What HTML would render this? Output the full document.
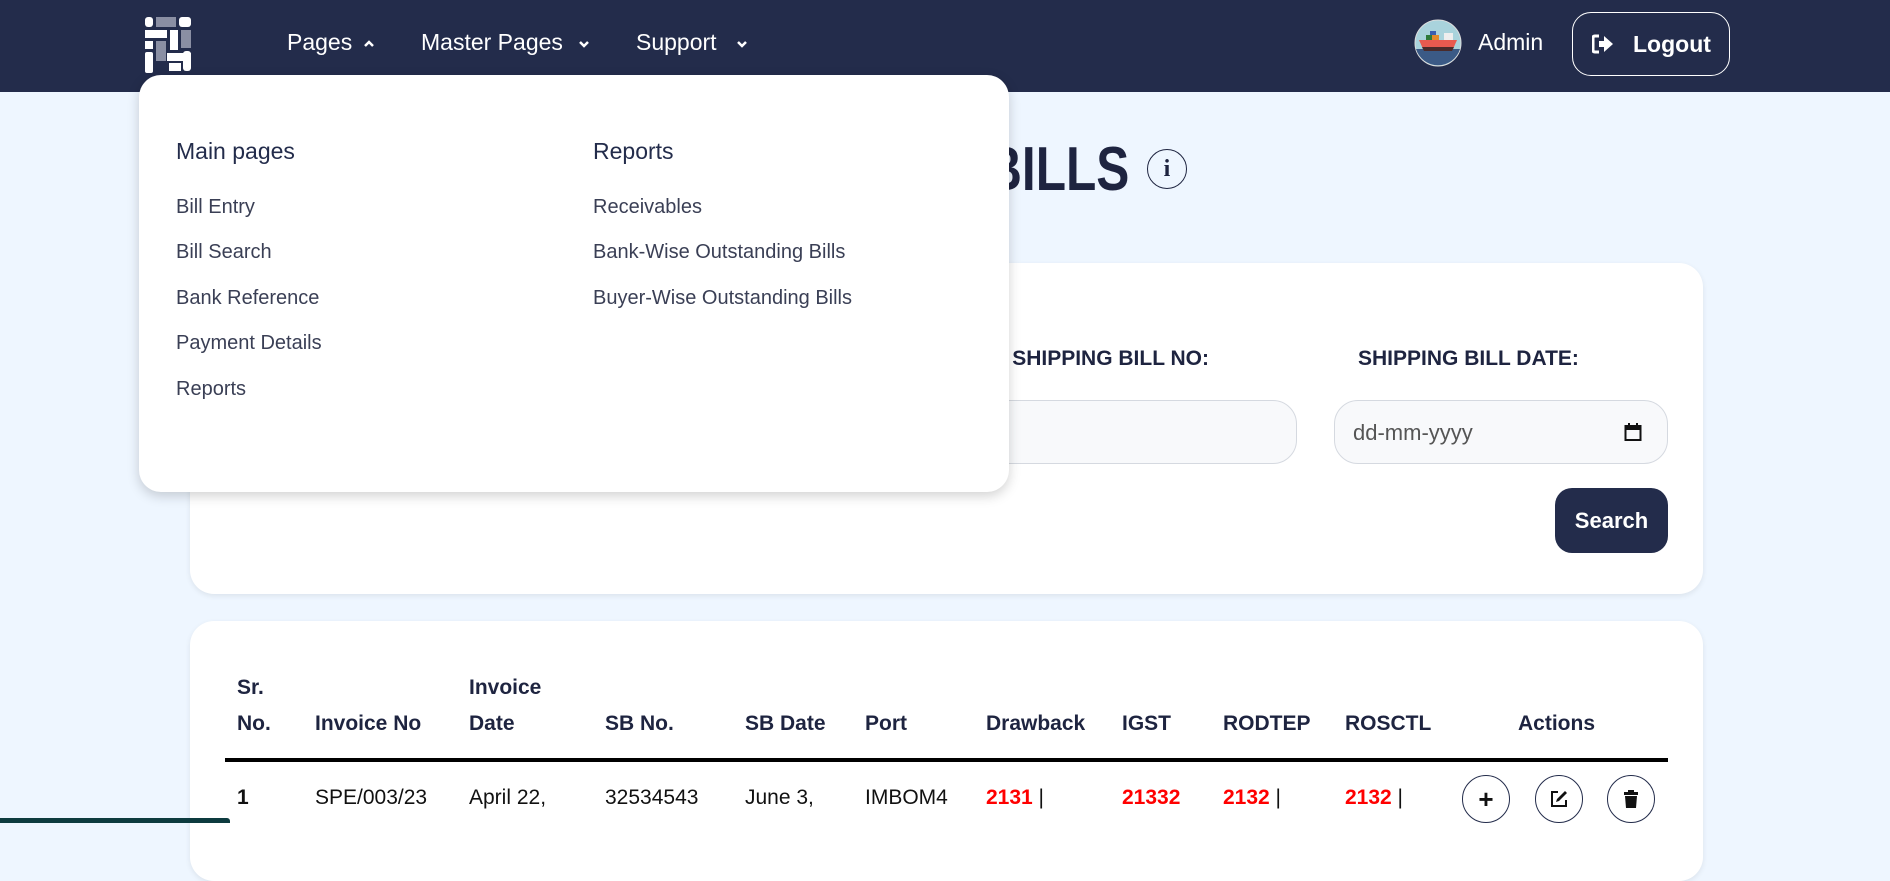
<!DOCTYPE html>
<html><head><meta charset="utf-8"><style>
*{margin:0;padding:0;box-sizing:border-box}
body{width:1890px;height:823px;overflow:hidden;background:#eef6ff;font-family:"Liberation Sans",sans-serif;position:relative;color:#232c4b}
.a{position:absolute;white-space:nowrap}
.nav{position:absolute;left:0;top:0;width:1890px;height:92px;background:#232c4b}
.nv{color:#fff;font-size:23px;top:29px}
.card{position:absolute;background:#fff;border-radius:24px;box-shadow:0 2px 6px rgba(0,0,0,.08)}
.dd{position:absolute;left:139px;top:75px;width:870px;height:417px;background:#fff;border-radius:22px;box-shadow:0 4px 12px rgba(0,0,0,.18)}
.h{font-size:23px;color:#232c4b}
.it{font-size:20px;color:#3a3f55}
.lbl{font-size:21px;font-weight:bold;color:#1e2440}
.th{font-size:21px;font-weight:bold;color:#1e2440}
.td{font-size:21px;color:#111;top:786px}
.red{color:#f00;font-weight:bold}
.circ{position:absolute;width:48px;height:48px;border:1.5px solid #232c4b;border-radius:50%;top:775px;display:flex;align-items:center;justify-content:center}
</style></head><body>
<div class="nav"></div>
<svg class="a" style="left:145px;top:17px" width="46" height="56" viewBox="0 0 46 56">
<rect x="0" y="0" width="8" height="10" rx="3" fill="#fff"/><rect x="11" y="0" width="20" height="10" fill="#8a8fa3"/><rect x="34" y="0" width="12" height="10" rx="3" fill="#fff"/>
<rect x="0" y="13" width="22" height="8" fill="#fff"/><rect x="25" y="13" width="8" height="20" fill="#fff"/><rect x="36" y="13" width="10" height="18" fill="#8a8fa3"/>
<rect x="0" y="24" width="8" height="8" fill="#fff"/><rect x="11" y="24" width="10" height="20" fill="#8a8fa3"/>
<rect x="0" y="35" width="8" height="21" rx="2" fill="#fff"/><rect x="22" y="36" width="24" height="8" fill="#fff"/><rect x="24" y="46" width="12" height="8" fill="#fff"/><rect x="38" y="34" width="8" height="20" rx="3" fill="#fff"/>
</svg>
<div class="a nv" style="left:287px">Pages</div>
<svg class="a" style="left:363px;top:40px" width="12" height="8" viewBox="0 0 12 8"><path d="M2 6L6 2L10 6" stroke="#fff" stroke-width="2.5" fill="none"/></svg>
<div class="a nv" style="left:421px">Master Pages</div>
<svg class="a" style="left:578px;top:40px" width="12" height="8" viewBox="0 0 12 8"><path d="M2 2L6 6L10 2" stroke="#fff" stroke-width="2.5" fill="none"/></svg>
<div class="a nv" style="left:636px">Support</div>
<svg class="a" style="left:736px;top:40px" width="12" height="8" viewBox="0 0 12 8"><path d="M2 2L6 6L10 2" stroke="#fff" stroke-width="2.5" fill="none"/></svg>
<svg class="a" style="left:1414px;top:19px" width="48" height="48" viewBox="0 0 48 48">
<circle cx="24" cy="24" r="23" fill="#a9d3dc" stroke="#ddd" stroke-width="1"/>
<path d="M2 30 H46 A23 23 0 0 1 2 30Z" fill="#3b5a86"/>
<rect x="12" y="16" width="6" height="5" fill="#2e7a3a"/><rect x="18" y="16" width="7" height="5" fill="#e38a2b"/><rect x="16" y="12" width="6" height="4" fill="#3a5fb0"/><rect x="30" y="14" width="9" height="7" fill="#eee"/>
<path d="M5 21 H43 L39 30 H9Z" fill="#e85a4f"/><path d="M8 28 H40 L38 32 H10Z" fill="#4a2b2b"/>
</svg>
<div class="a" style="left:1478px;top:29px;color:#fff;font-size:23px">Admin</div>
<div class="a" style="left:1572px;top:12px;width:158px;height:64px;border:1.5px solid #fff;border-radius:19px"></div>
<svg class="a" style="left:1592px;top:34px" width="22" height="20" viewBox="0 0 22 20"><path d="M7 2H3Q1 2 1 4V16Q1 18 3 18H7" stroke="#fff" stroke-width="3" fill="none"/><path d="M7 7H12V2L21 10L12 18V13H7Z" fill="#fff"/></svg>
<div class="a" style="left:1633px;top:31px;color:#fff;font-size:23px;font-weight:bold">Logout</div>

<div class="a" style="right:761px;top:134px;font-size:62px;font-weight:bold;color:#1e2440;transform:scaleX(0.8);transform-origin:right center">OUTSTANDING BILLS</div>
<div class="a" style="left:1147px;top:149px;width:40px;height:40px;border:1.5px solid #1e2440;border-radius:50%;text-align:center;font:bold 24px 'Liberation Serif',serif;line-height:38px;color:#1e2440">i</div>

<div class="card" style="left:190px;top:263px;width:1513px;height:331px"></div>
<div class="a lbl" style="right:681px;top:347px">SHIPPING BILL NO:</div>
<div class="a lbl" style="left:1358px;top:347px">SHIPPING BILL DATE:</div>
<div class="a" style="left:900px;top:400px;width:397px;height:64px;background:#f8f9fb;border:1px solid #d5d9e0;border-radius:24px"></div>
<div class="a" style="left:1334px;top:400px;width:334px;height:64px;background:#f8f9fb;border:1px solid #d5d9e0;border-radius:24px"></div>
<div class="a" style="left:1353px;top:420px;font-size:22px;color:#555">dd-mm-yyyy</div>
<svg class="a" style="left:1624px;top:422px" width="18" height="20" viewBox="0 0 18 20"><rect x="1.5" y="4" width="15" height="14" fill="none" stroke="#111" stroke-width="2"/><rect x="1.5" y="4" width="15" height="4" fill="#111"/><rect x="4" y="1" width="2" height="4" fill="#111"/><rect x="12" y="1" width="2" height="4" fill="#111"/></svg>
<div class="a" style="left:1555px;top:488px;width:113px;height:65px;background:#232c4b;border-radius:17px;color:#fff;font-size:22px;font-weight:bold;text-align:center;line-height:65px">Search</div>

<div class="card" style="left:190px;top:621px;width:1513px;height:260px"></div>
<div class="a th" style="left:237px;top:676px">Sr.</div>
<div class="a th" style="left:469px;top:676px">Invoice</div>
<div class="a th" style="left:237px;top:712px">No.</div>
<div class="a th" style="left:315px;top:712px">Invoice No</div>
<div class="a th" style="left:469px;top:712px">Date</div>
<div class="a th" style="left:605px;top:712px">SB No.</div>
<div class="a th" style="left:745px;top:712px">SB Date</div>
<div class="a th" style="left:865px;top:712px">Port</div>
<div class="a th" style="left:986px;top:712px">Drawback</div>
<div class="a th" style="left:1122px;top:712px">IGST</div>
<div class="a th" style="left:1223px;top:712px">RODTEP</div>
<div class="a th" style="left:1345px;top:712px">ROSCTL</div>
<div class="a th" style="left:1518px;top:712px">Actions</div>
<div class="a" style="left:225px;top:758px;width:1443px;height:4px;background:#000"></div>
<div class="a td" style="left:237px;font-weight:bold">1</div>
<div class="a td" style="left:315px">SPE/003/23</div>
<div class="a td" style="left:469px">April 22,</div>
<div class="a td" style="left:605px">32534543</div>
<div class="a td" style="left:745px">June 3,</div>
<div class="a td" style="left:865px">IMBOM4</div>
<div class="a td" style="left:986px"><span class="red">2131</span> |</div>
<div class="a td red" style="left:1122px">21332</div>
<div class="a td" style="left:1223px"><span class="red">2132</span> |</div>
<div class="a td" style="left:1345px"><span class="red">2132</span> |</div>
<div class="circ" style="left:1462px"><span style="font-size:26px;font-weight:bold;color:#111;line-height:1">+</span></div>
<div class="circ" style="left:1535px"><svg width="20" height="20" viewBox="0 0 20 20"><path d="M9 3H3V17H17V11" stroke="#111" stroke-width="2" fill="none"/><path d="M16 2L18 4L10 12L7 13L8 10Z" fill="#111"/></svg></div>
<div class="circ" style="left:1607px"><svg width="16" height="20" viewBox="0 0 16 20"><rect x="1" y="3" width="14" height="3" fill="#111"/><rect x="5" y="1" width="6" height="2" fill="#111"/><path d="M2 7H14L13 19H3Z" fill="#111"/></svg></div>

<div class="dd"></div>
<div class="a h" style="left:176px;top:138px">Main pages</div>
<div class="a h" style="left:593px;top:138px">Reports</div>
<div class="a it" style="left:176px;top:196px">Bill Entry</div>
<div class="a it" style="left:176px;top:241px">Bill Search</div>
<div class="a it" style="left:176px;top:287px">Bank Reference</div>
<div class="a it" style="left:176px;top:332px">Payment Details</div>
<div class="a it" style="left:176px;top:378px">Reports</div>
<div class="a it" style="left:593px;top:196px">Receivables</div>
<div class="a it" style="left:593px;top:241px">Bank-Wise Outstanding Bills</div>
<div class="a it" style="left:593px;top:287px">Buyer-Wise Outstanding Bills</div>

<div class="a" style="left:0;top:818px;width:230px;height:5px;background:#0d3b3f;border-radius:0 3px 0 0"></div>
</body></html>
